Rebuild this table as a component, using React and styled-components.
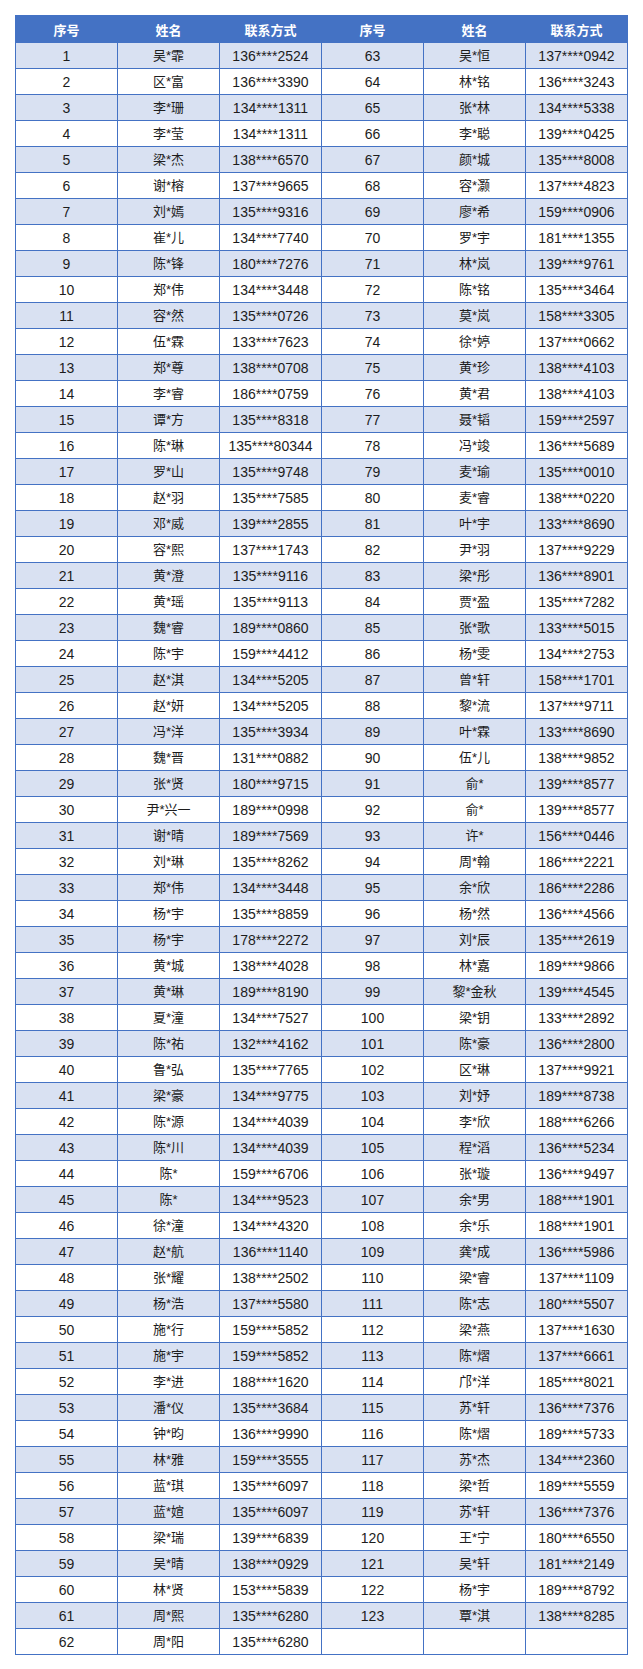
import React from "react";
import styled, { createGlobalStyle } from "styled-components";

const Global = createGlobalStyle`
  html, body { margin: 0; padding: 0; background: #ffffff; }
  body { padding: 15px; font-family: "Liberation Sans", "Noto Sans CJK SC", Arial, sans-serif; }
`;

const left = `吴*霏 136****2524
区*富 136****3390
李*珊 134****1311
李*莹 134****1311
梁*杰 138****6570
谢*榕 137****9665
刘*嫣 135****9316
崔*儿 134****7740
陈*锋 180****7276
郑*伟 134****3448
容*然 135****0726
伍*霖 133****7623
郑*尊 138****0708
李*睿 186****0759
谭*方 135****8318
陈*琳 135****80344
罗*山 135****9748
赵*羽 135****7585
邓*威 139****2855
容*熙 137****1743
黄*澄 135****9116
黄*瑶 135****9113
魏*睿 189****0860
陈*宇 159****4412
赵*淇 134****5205
赵*妍 134****5205
冯*洋 135****3934
魏*晋 131****0882
张*贤 180****9715
尹*兴一 189****0998
谢*晴 189****7569
刘*琳 135****8262
郑*伟 134****3448
杨*宇 135****8859
杨*宇 178****2272
黄*城 138****4028
黄*琳 189****8190
夏*潼 134****7527
陈*祐 132****4162
鲁*弘 135****7765
梁*豪 134****9775
陈*源 134****4039
陈*川 134****4039
陈* 159****6706
陈* 134****9523
徐*潼 134****4320
赵*航 136****1140
张*耀 138****2502
杨*浩 137****5580
施*行 159****5852
施*宇 159****5852
李*进 188****1620
潘*仪 135****3684
钟*昀 136****9990
林*雅 159****3555
蓝*琪 135****6097
蓝*媗 135****6097
梁*瑞 139****6839
吴*晴 138****0929
林*贤 153****5839
周*熙 135****6280
周*阳 135****6280`;

const right = `吴*恒 137****0942
林*铭 136****3243
张*林 134****5338
李*聪 139****0425
颜*城 135****8008
容*灏 137****4823
廖*希 159****0906
罗*宇 181****1355
林*岚 139****9761
陈*铭 135****3464
莫*岚 158****3305
徐*婷 137****0662
黄*珍 138****4103
黄*君 138****4103
聂*韬 159****2597
冯*竣 136****5689
麦*瑜 135****0010
麦*睿 138****0220
叶*宇 133****8690
尹*羽 137****9229
梁*彤 136****8901
贾*盈 135****7282
张*歌 133****5015
杨*雯 134****2753
曾*轩 158****1701
黎*流 137****9711
叶*霖 133****8690
伍*儿 138****9852
俞* 139****8577
俞* 139****8577
许* 156****0446
周*翰 186****2221
余*欣 186****2286
杨*然 136****4566
刘*辰 135****2619
林*嘉 189****9866
黎*金秋 139****4545
梁*钥 133****2892
陈*豪 136****2800
区*琳 137****9921
刘*妤 189****8738
李*欣 188****6266
程*滔 136****5234
张*璇 136****9497
余*男 188****1901
余*乐 188****1901
龚*成 136****5986
梁*睿 137****1109
陈*志 180****5507
梁*燕 137****1630
陈*熠 137****6661
邝*洋 185****8021
苏*轩 136****7376
陈*熠 189****5733
苏*杰 134****2360
梁*哲 189****5559
苏*轩 136****7376
王*宁 180****6550
吴*轩 181****2149
杨*宇 189****8792
覃*淇 138****8285`;

const parse = (s, start) =>
  s.split("\n").map((line, i) => {
    const [name, phone] = line.trim().split(" ");
    return { no: start + i, name, phone };
  });

const leftRows = parse(left, 1);
const rightRows = parse(right, 63);

const Table = styled.table`
  width: 100%;
  border-collapse: collapse;
  table-layout: fixed;
  border: 1px solid #4472c4;
`;

const HeadCell = styled.th`
  height: 26px;
  padding: 0;
  background: #4472c4;
  color: #ffffff;
  font-size: 13px;
  font-weight: 700;
  text-align: center;
  vertical-align: middle;
  border: 1px solid #4472c4;
  font-family: "Noto Sans CJK SC", "Liberation Sans", sans-serif;
`;

const Row = styled.tr`
  height: 26px;
  background: ${(p) => (p.$shaded ? "#d9e1f2" : "#ffffff")};
`;

const Cell = styled.td`
  padding: 0;
  text-align: center;
  vertical-align: middle;
  border: 1px solid #4472c4;
  color: #1c1c1c;
  font-size: ${(p) => (p.$cjk ? "13px" : "14px")};
  line-height: 16px;
  white-space: nowrap;
`;

const headers = ["序号", "姓名", "联系方式", "序号", "姓名", "联系方式"];

export default function App() {
  return (
    <>
      <Global />
      <Table>
        <thead>
          <tr>
            {headers.map((h, i) => (
              <HeadCell key={i}>{h}</HeadCell>
            ))}
          </tr>
        </thead>
        <tbody>
          {leftRows.map((l, i) => {
            const r = rightRows[i];
            return (
              <Row key={l.no} $shaded={i % 2 === 0}>
                <Cell>{l.no}</Cell>
                <Cell $cjk>{l.name}</Cell>
                <Cell>{l.phone}</Cell>
                <Cell>{r ? r.no : ""}</Cell>
                <Cell $cjk>{r ? r.name : ""}</Cell>
                <Cell>{r ? r.phone : ""}</Cell>
              </Row>
            );
          })}
        </tbody>
      </Table>
    </>
  );
}
